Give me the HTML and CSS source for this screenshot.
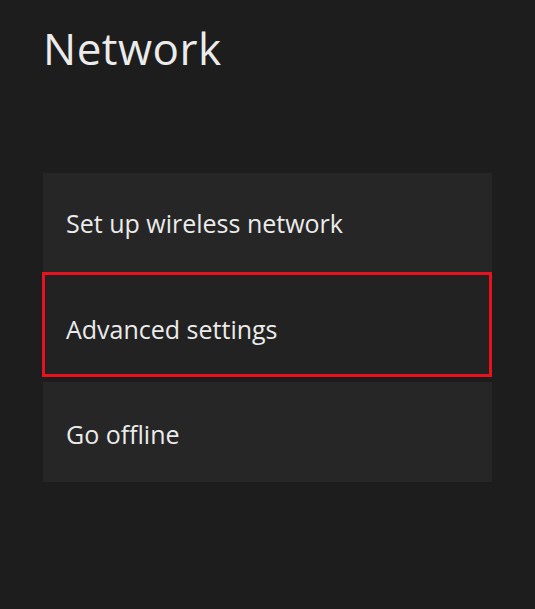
FILE: index.html
```html
<!DOCTYPE html>
<html>
<head>
<meta charset="utf-8">
<link rel="stylesheet" href="styles.css">
</head>
<body>
<div class="page">
  <h1 class="title">Network</h1>
  <div class="menu">
    <div class="item first">Set up wireless network</div>
    <div class="item selected">Advanced settings</div>
    <div class="item last">Go offline</div>
  </div>
</div>
</body>
</html>
```
FILE: styles.css
```css
html, body {
  margin: 0;
  padding: 0;
  background: #1d1d1d;
  height: 100%;
}
.page {
  padding: 0 43px;
  font-family: "Open Sans", "Noto Sans", sans-serif;
  color: #ebebeb;
}
.title {
  margin: 0;
  padding-top: 20px;
  font-size: 44px;
  font-weight: 400;
  line-height: 56px;
  letter-spacing: 0.5px;
}
.menu {
  margin-top: 97px;
  width: 449px;
  display: flex;
  flex-direction: column;
}
.item {
  height: 100px;
  background: #262626;
  display: flex;
  align-items: center;
  padding-left: 23px;
  font-size: 25px;
  box-sizing: border-box;
}
.item.first {
  height: 99px;
}
.item.selected {
  height: 105px;
  margin-left: -1px;
  width: 450px;
  padding-left: 21px;
  padding-top: 9px;
  background: #222222;
  border: 3px solid #e8111e;
}
.item.last {
  margin-top: 5px;
  padding-top: 3px;
}
```
